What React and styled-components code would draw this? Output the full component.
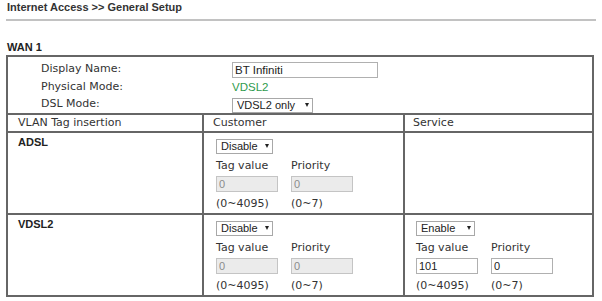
import React from 'react';
import styled, { createGlobalStyle } from 'styled-components';

const GlobalStyle = createGlobalStyle`
  body {
    margin: 0;
    background: #fff;
  }
`;

const Page = styled.div`
  width: 602px;
  box-sizing: border-box;
  padding: 0 6px;
`;

const Title = styled.h1`
  margin: 0;
  padding: 0 0 5px 1px;
  border-bottom: 2px solid #c2c2c2;
  font: bold 11px/14px "Liberation Sans", Arial, sans-serif;
  color: #333;
`;

const Heading = styled.h2`
  margin: 19px 0 1px;
  padding-left: 1px;
  font: bold 11px/14px "Liberation Sans", Arial, sans-serif;
  color: #222;
`;

const Frame = styled.div`
  display: grid;
  grid-template-columns: 194px 199px 187px;
  grid-template-rows: 56px 16px 80px 80px;
  gap: 2px;
  padding: 2px;
  width: 588px;
  box-sizing: border-box;
  background: #666;
`;

const Summary = styled.div`
  grid-column: 1 / -1;
  display: grid;
  grid-template-columns: 191px auto;
  grid-template-rows: 18px 17px 17px;
  align-items: center;
  padding: 3px 0 1px 33px;
  background: #fff;
`;

const Label = styled.div`
  font: 11px/14px "DejaVu Sans", Verdana, sans-serif;
  color: #333;
`;

const Value = styled.div`
  font: 11.5px/14px "Liberation Sans", Arial, sans-serif;
  color: ${p => p.$color || '#222'};
`;

const HeadCell = styled.div`
  display: flex;
  align-items: center;
  padding-left: ${p => p.$pl}px;
  background: #fff;
  font: 11px/16px "DejaVu Sans", Verdana, sans-serif;
  color: #333;
`;

const NameCell = styled.div`
  padding: 3px 0 0 10px;
  background: #fff;
  font: bold 11px/12px "Liberation Sans", Arial, sans-serif;
  color: #222;
`;

const VlanCell = styled.div`
  display: grid;
  grid-template-columns: 75px auto;
  align-content: start;
  justify-items: start;
  padding: 6px 0 0 ${p => p.$pl}px;
  background: #fff;
`;

const SelectWrap = styled.span`
  position: relative;
  display: inline-block;
  grid-column: 1 / -1;
  width: ${p => p.$w}px;
  height: 15px;
`;

const Dropdown = styled.select`
  appearance: none;
  display: block;
  width: 100%;
  height: 15px;
  margin: 0;
  padding: 0 0 0 4px;
  box-sizing: border-box;
  border: 1px solid #a8a8a8;
  border-radius: 0;
  background: #fff;
  font: 11px/13px "Liberation Sans", Arial, sans-serif;
  color: #222;
`;

const Arrow = styled.span`
  position: absolute;
  right: 4px;
  top: 5px;
  width: 0;
  height: 0;
  border-left: 2.5px solid transparent;
  border-right: 2.5px solid transparent;
  border-top: 4px solid #222;
  pointer-events: none;
`;

const FieldLabel = styled.div`
  margin-top: 4px;
  font: 11px/16px "DejaVu Sans", Verdana, sans-serif;
  color: #333;
`;

const Range = styled(FieldLabel)``;

const Field = styled.input`
  width: ${p => p.$w || 62}px;
  height: 16px;
  margin: ${p => (p.$w ? 0 : '2px 0 0')};
  padding: 0 2px;
  box-sizing: border-box;
  border: 1px solid #b0b0b0;
  border-radius: 0;
  background: #fff;
  font: ${p => (p.$w ? 11.5 : 11)}px "Liberation Sans", Arial, sans-serif;
  color: #222;

  &:disabled {
    border-color: #c4c4c4;
    background: #ebebeb;
    color: #8c8c8c;
  }
`;

const Select = ({ width, value, options }) => (
  <SelectWrap $w={width}>
    <Dropdown defaultValue={value}>
      {options.map(o => <option key={o}>{o}</option>)}
    </Dropdown>
    <Arrow />
  </SelectWrap>
);

const TagFields = ({ pl, mode, tag, priority }) => {
  const off = mode === 'Disable';
  return (
    <VlanCell $pl={pl}>
      <Select width={mode === 'Enable' ? 59 : 57} value={mode} options={['Disable', 'Enable']} />
      <FieldLabel>Tag value</FieldLabel>
      <FieldLabel>Priority</FieldLabel>
      <Field defaultValue={tag} disabled={off} />
      <Field defaultValue={priority} disabled={off} />
      <Range>(0~4095)</Range>
      <Range>(0~7)</Range>
    </VlanCell>
  );
};

export default function App() {
  return (
    <>
      <GlobalStyle />
      <Page>
        <Title>Internet Access &gt;&gt; General Setup</Title>
        <Heading>WAN 1</Heading>
        <Frame>
          <Summary>
            <Label>Display Name:</Label>
            <div><Field $w={146} defaultValue="BT Infiniti" /></div>
            <Label>Physical Mode:</Label>
            <Value $color="#2e9b4e">VDSL2</Value>
            <Label>DSL Mode:</Label>
            <div>
              <Select width={81} value="VDSL2 only" options={['VDSL2 only', 'ADSL only', 'Auto']} />
            </div>
          </Summary>

          <HeadCell $pl={10}>VLAN Tag insertion</HeadCell>
          <HeadCell $pl={9}>Customer</HeadCell>
          <HeadCell $pl={8}>Service</HeadCell>

          <NameCell>ADSL</NameCell>
          <TagFields pl={12} mode="Disable" tag="0" priority="0" />
          <VlanCell $pl={11} />

          <NameCell>VDSL2</NameCell>
          <TagFields pl={12} mode="Disable" tag="0" priority="0" />
          <TagFields pl={11} mode="Enable" tag="101" priority="0" />
        </Frame>
      </Page>
    </>
  );
}
